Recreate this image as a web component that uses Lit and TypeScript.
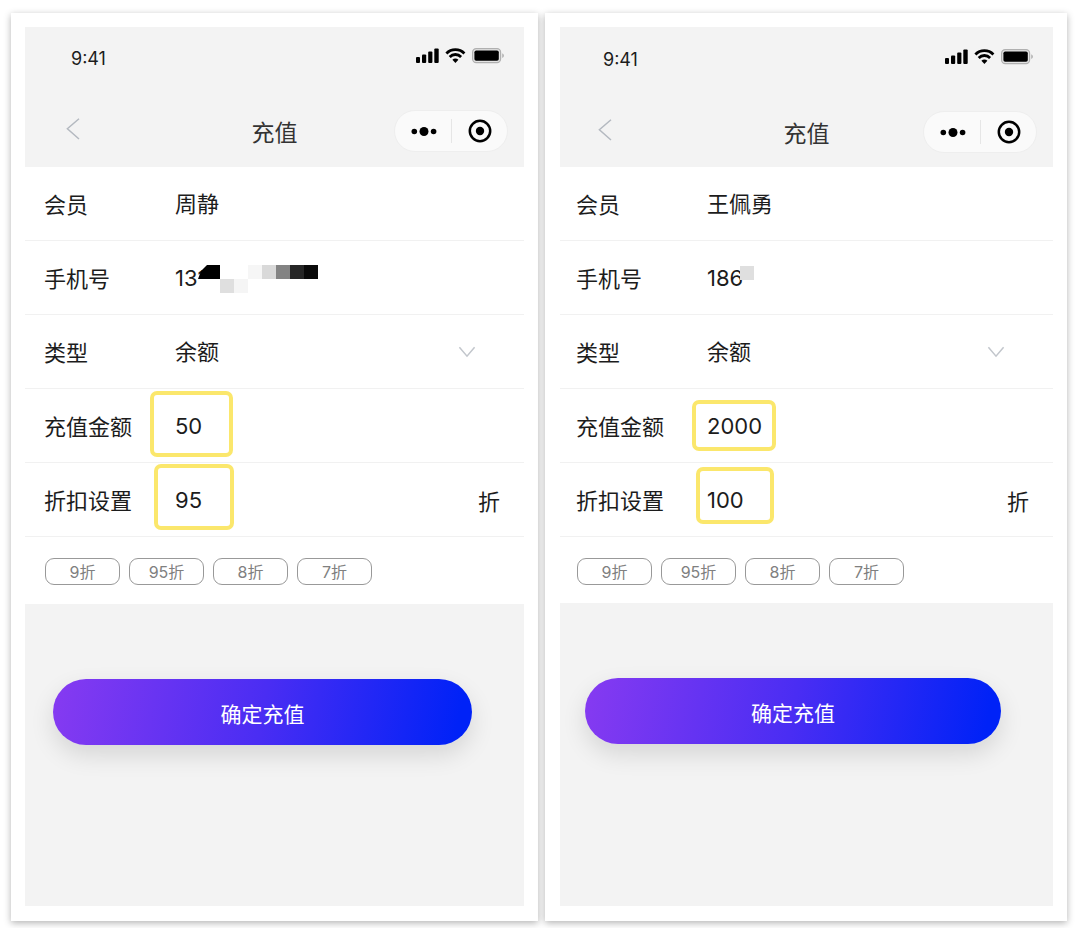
import { LitElement, html, css, svg } from "lit";
import { customElement, property } from "lit/decorators.js";
import { styleMap } from "lit/directives/style-map.js";

interface Mark {
  left: number;
  top: number;
  width: number;
  height: number;
}

interface Tile {
  points: string;
  color: string;
}

interface Recharge {
  member: string;
  phone: string;
  amount: string;
  discount: string;
  mosaic: Tile[];
  marks: Mark[];
}

const square = (x: number, y: number, color: string): Tile => ({
  points: `${x},${y} ${x + 14},${y} ${x + 14},${y + 14} ${x},${y + 14}`,
  color,
});

const RECORDS: Recharge[] = [
  {
    member: "周静",
    phone: "131",
    amount: "50",
    discount: "95",
    mosaic: [
      { points: "23,14 45,14 45,28 23,28", color: "#fff" },
      { points: "32,0 45,0 45,14 23,14 26,6", color: "#000" },
      square(45, 14, "#dfdfdf"),
      square(59, 14, "#f5f5f5"),
      square(73, 0, "#f6f6f6"),
      square(87, 0, "#d9d9d9"),
      square(101, 0, "#838383"),
      square(115, 0, "#262626"),
      square(129, 0, "#0a0a0a"),
    ],
    marks: [
      { left: 125, top: 364, width: 83, height: 66 },
      { left: 129, top: 437, width: 80, height: 66 },
    ],
  },
  {
    member: "王佩勇",
    phone: "186",
    amount: "2000",
    discount: "100",
    mosaic: [square(33, 1, "#dfdfdf")],
    marks: [
      { left: 132, top: 373, width: 84, height: 51 },
      { left: 136, top: 440, width: 78, height: 57 },
    ],
  },
];

@customElement("recharge-screen")
export class RechargeScreen extends LitElement {
  @property({ attribute: false }) record!: Recharge;

  static styles = css`
    :host {
      --inset: 19px;
      --status-top: 20px;
      --nav-bottom: 15px;
      --chips: 67px;
      display: flex;
      flex-direction: column;
      position: relative;
      background: #f3f3f3;
      color: #1c1c1c;
    }
    :host([compact]) {
      --inset: 16px;
      --status-top: 21px;
      --nav-bottom: 14px;
      --chips: 66px;
    }
    * {
      box-sizing: border-box;
    }
    button,
    input,
    select {
      margin: 0;
      padding: 0;
      border: 0;
      border-radius: 0;
      background: none;
      color: inherit;
      font: inherit;
      outline: none;
      appearance: none;
    }
    button {
      cursor: pointer;
    }
    svg {
      display: block;
    }
    .header {
      height: 140px;
      padding: var(--status-top) 16px var(--nav-bottom);
      display: flex;
      flex-direction: column;
      justify-content: space-between;
    }
    .status {
      display: flex;
      justify-content: space-between;
      padding: 0 3px 0 calc(var(--inset) + 11px);
    }
    .time {
      font-size: 18px;
      line-height: 24px;
    }
    .nav {
      display: grid;
      grid-template-columns: 114px 1fr 114px;
      align-items: center;
    }
    .back {
      justify-self: start;
      width: 14px;
      height: 26px;
      margin-left: calc(var(--inset) + 6px);
    }
    .title {
      margin: 0;
      padding-top: 3px;
      text-align: center;
      font-size: 23px;
      font-weight: 400;
      line-height: 36px;
      color: #333;
    }
    .capsule {
      display: grid;
      grid-template-columns: 57px 1fr;
      height: 42px;
      border: 1px solid #eeeeee;
      border-radius: 21px;
      background: #fafafa;
    }
    .capsule button {
      display: grid;
      place-items: center;
    }
    .form {
      background: #fff;
      font-size: 22px;
    }
    .row {
      display: grid;
      grid-template-columns: 131px 1fr auto;
      align-items: center;
      height: 74px;
      padding: 0 24px 0 var(--inset);
      border-bottom: 1px solid #f1f1f1;
    }
    .row label {
      padding-top: 3px;
      line-height: 30px;
    }
    .row input,
    .row select {
      width: 100%;
      height: 40px;
      line-height: 40px;
    }
    .masked {
      position: relative;
    }
    .mosaic {
      position: absolute;
      left: 0;
      top: 7px;
      pointer-events: none;
    }
    .chevron {
      margin-right: 24px;
      pointer-events: none;
    }
    .chips {
      display: flex;
      gap: 9px;
      height: var(--chips);
      padding: 21px 0 0 calc(var(--inset) + 1px);
    }
    .chip {
      width: 75px;
      height: 27px;
      border: 1px solid #999;
      border-radius: 9px;
      font-size: 16px;
      line-height: 24px;
      color: #808080;
    }
    .submit {
      height: 66px;
      margin: 75px 52px 0 calc(var(--inset) + 9px);
      padding-top: 2px;
      border-radius: 33px;
      background: linear-gradient(100deg, #843af1 2%, #4a2df3 50%, #0022f7 96%);
      box-shadow: 0 10px 24px rgba(0, 0, 0, 0.12);
      color: #fff;
      font-size: 21px;
    }
    .mark {
      position: absolute;
      border: 4px solid #fbe76c;
      border-radius: 7px;
      pointer-events: none;
    }
  `;

  private statusIcons() {
    return html`<svg width="90" height="17" viewBox="0 0 90 17" aria-hidden="true">
      <rect x="1" y="10" width="4" height="6" rx="1" />
      <rect x="7" y="7.5" width="4.2" height="8.5" rx="1" />
      <rect x="13.2" y="4.6" width="4.2" height="11.4" rx="1" />
      <rect x="19.3" y="1.6" width="4.4" height="14.4" rx="1" />
      <g fill="none" stroke="#000" stroke-width="2.8">
        <path d="M31.4 6.4a12.6 12.6 0 0 1 18 0" />
        <path d="M34.7 9.9a8 8 0 0 1 11.4 0" />
      </g>
      <path d="M37.4 12.7a4.2 4.2 0 0 1 6 0l-3 3.2z" />
      <rect x="57.6" y="1.6" width="28" height="14" rx="3.6" fill="#e4e4e4" stroke="#b0b0b0" stroke-width="1.2" />
      <rect x="59.4" y="3.4" width="24.4" height="10.4" rx="1.8" />
      <path d="M87.4 6.2c1.8.8 1.8 4 0 4.8z" fill="#a0a0a0" />
    </svg>`;
  }

  render() {
    const r = this.record;
    return html`
      <header class="header">
        <div class="status">
          <span class="time">9:41</span>
          ${this.statusIcons()}
        </div>
        <div class="nav">
          <button class="back" type="button" aria-label="返回">
            <svg width="14" height="26" viewBox="0 0 14 26" fill="none" stroke="#b4b9c0" stroke-width="1.5">
              <path d="M13 .8 1.4 10.8 13 21" />
            </svg>
          </button>
          <h1 class="title">充值</h1>
          <div class="capsule">
            <button type="button" aria-label="更多">
              <svg width="56" height="40" viewBox="0 0 56 40">
                <circle cx="18.3" cy="20.5" r="2.8" />
                <circle cx="28" cy="20.5" r="4.5" />
                <circle cx="37.6" cy="20.5" r="2.8" />
                <path d="M55.5 8v24" stroke="#e6e6e6" />
              </svg>
            </button>
            <button type="button" aria-label="关闭">
              <svg width="56" height="40" viewBox="0 0 56 40">
                <circle cx="28" cy="20" r="10.2" fill="none" stroke="#000" stroke-width="2.5" />
                <circle cx="28" cy="20" r="4.2" />
              </svg>
            </button>
          </div>
        </div>
      </header>

      <form class="form" @submit=${(e: Event) => e.preventDefault()}>
        <div class="row">
          <label for="member">会员</label>
          <input id="member" type="text" readonly .value=${r.member} />
        </div>
        <div class="row">
          <label for="phone">手机号</label>
          <div class="masked">
            <input id="phone" type="text" readonly .value=${r.phone} />
            <svg class="mosaic" width="144" height="28" viewBox="0 0 144 28" aria-hidden="true">
              ${r.mosaic.map((t) => svg`<polygon points=${t.points} fill=${t.color} />`)}
            </svg>
          </div>
        </div>
        <div class="row">
          <label for="type">类型</label>
          <select id="type">
            <option>余额</option>
          </select>
          <svg class="chevron" width="18" height="12" viewBox="0 0 18 12" fill="none" stroke="#c2c6cc" stroke-width="1.5" aria-hidden="true">
            <path d="m1.4 1.2 7.6 9 7.6-9" />
          </svg>
        </div>
        <div class="row">
          <label for="amount">充值金额</label>
          <input id="amount" type="text" inputmode="decimal" .value=${r.amount} />
        </div>
        <div class="row">
          <label for="discount">折扣设置</label>
          <input id="discount" type="text" inputmode="numeric" .value=${r.discount} />
          <span>折</span>
        </div>
        <div class="chips">
          ${["9折", "95折", "8折", "7折"].map(
            (c) => html`<button class="chip" type="button">${c}</button>`
          )}
        </div>
      </form>

      <button class="submit" type="button">确定充值</button>

      ${r.marks.map(
        (m) => html`<div
          class="mark"
          style=${styleMap({
            left: `${m.left}px`,
            top: `${m.top}px`,
            width: `${m.width}px`,
            height: `${m.height}px`,
          })}
        ></div>`
      )}
    `;
  }
}

@customElement("app-root")
export class AppRoot extends LitElement {
  static styles = css`
    :host {
      display: grid;
      grid-template-columns: 527fr 522fr;
      gap: 7px;
      box-sizing: border-box;
      min-height: 100vh;
      padding: 13px 13px 7px 11px;
      background: #fff;
      font-family: Inter, "Noto Sans CJK SC", sans-serif;
    }
    .card {
      display: grid;
      min-width: 0;
      padding: 14px 14px 15px;
      background: #fff;
      box-shadow: 0 2px 7px rgba(0, 0, 0, 0.3);
    }
    .card + .card {
      padding-left: 15px;
    }
  `;

  render() {
    return RECORDS.map(
      (r, i) => html`<section class="card">
        <recharge-screen .record=${r} ?compact=${i === 1}></recharge-screen>
      </section>`
    );
  }
}
